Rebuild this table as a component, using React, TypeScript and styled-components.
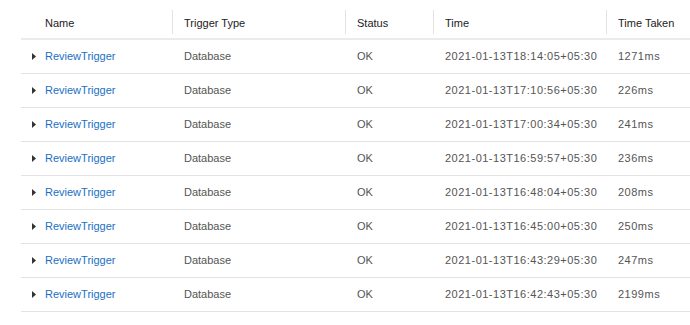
import React from 'react';
import styled, { createGlobalStyle } from 'styled-components';

const GlobalStyle = createGlobalStyle`
  html, body {
    margin: 0;
    padding: 0;
    background: #ffffff;
  }

  body {
    font-family: 'Liberation Sans', Arial, sans-serif;
    font-size: 11px;
  }

  *, *::before, *::after {
    box-sizing: border-box;
  }
`;

const Page = styled.div`
  padding: 5px 0 0 21px;
`;

const Table = styled.table`
  width: 669px;
  border-collapse: collapse;
  table-layout: fixed;
`;

const Column = styled.col<{ $width?: number }>`
  width: ${(props) => (props.$width ? `${props.$width}px` : 'auto')};
`;

const HeadCell = styled.th<{ $divider?: boolean; $inset?: number }>`
  position: relative;
  height: 34px;
  padding: 2px 0 0 ${(props) => props.$inset ?? 12}px;
  text-align: left;
  font-weight: 500;
  color: #222222;
  border-bottom: 2px solid #ebebeb;
  white-space: nowrap;

  &::before {
    content: '';
    display: ${(props) => (props.$divider ? 'block' : 'none')};
    position: absolute;
    left: 0;
    top: 5px;
    bottom: 4px;
    width: 1px;
    background: #e3e3e3;
  }
`;

const Row = styled.tr`
  border-bottom: 1px solid #e3e3e3;
`;

const Cell = styled.td<{ $inset?: number; $numeric?: boolean }>`
  height: 34px;
  padding: 0 0 0 ${(props) => props.$inset ?? 12}px;
  color: #555555;
  white-space: nowrap;
  letter-spacing: ${(props) => (props.$numeric ? '0.5px' : 'normal')};
`;

const NameWrap = styled.span`
  display: flex;
  align-items: center;
  gap: 9px;
`;

const Caret = styled.svg`
  width: 4px;
  height: 7px;
  flex: none;
`;

const NameLink = styled.a`
  color: #1a6fc4;
  text-decoration: none;
  cursor: pointer;
`;

type Run = { time: string; taken: string };

const runs: Run[] = [
  { time: '2021-01-13T18:14:05+05:30', taken: '1271ms' },
  { time: '2021-01-13T17:10:56+05:30', taken: '226ms' },
  { time: '2021-01-13T17:00:34+05:30', taken: '241ms' },
  { time: '2021-01-13T16:59:57+05:30', taken: '236ms' },
  { time: '2021-01-13T16:48:04+05:30', taken: '208ms' },
  { time: '2021-01-13T16:45:00+05:30', taken: '250ms' },
  { time: '2021-01-13T16:43:29+05:30', taken: '247ms' },
  { time: '2021-01-13T16:42:43+05:30', taken: '2199ms' },
];

const App: React.FC = () => {
  return (
    <Page>
      <GlobalStyle />
      <Table>
        <colgroup>
          <Column $width={151} />
          <Column $width={173} />
          <Column $width={88} />
          <Column $width={173} />
          <Column />
        </colgroup>
        <thead>
          <tr>
            <HeadCell $inset={24}>Name</HeadCell>
            <HeadCell $divider>Trigger Type</HeadCell>
            <HeadCell $divider>Status</HeadCell>
            <HeadCell $divider>Time</HeadCell>
            <HeadCell $divider>Time Taken</HeadCell>
          </tr>
        </thead>
        <tbody>
          {runs.map((run) => (
            <Row key={run.time}>
              <Cell $inset={11}>
                <NameWrap>
                  <Caret viewBox="0 0 4 7">
                    <path d="M0 0 L4 3.5 L0 7 Z" fill="#333333" />
                  </Caret>
                  <NameLink>ReviewTrigger</NameLink>
                </NameWrap>
              </Cell>
              <Cell>Database</Cell>
              <Cell>OK</Cell>
              <Cell $numeric>{run.time}</Cell>
              <Cell $numeric>{run.taken}</Cell>
            </Row>
          ))}
        </tbody>
      </Table>
    </Page>
  );
};

export default App;
